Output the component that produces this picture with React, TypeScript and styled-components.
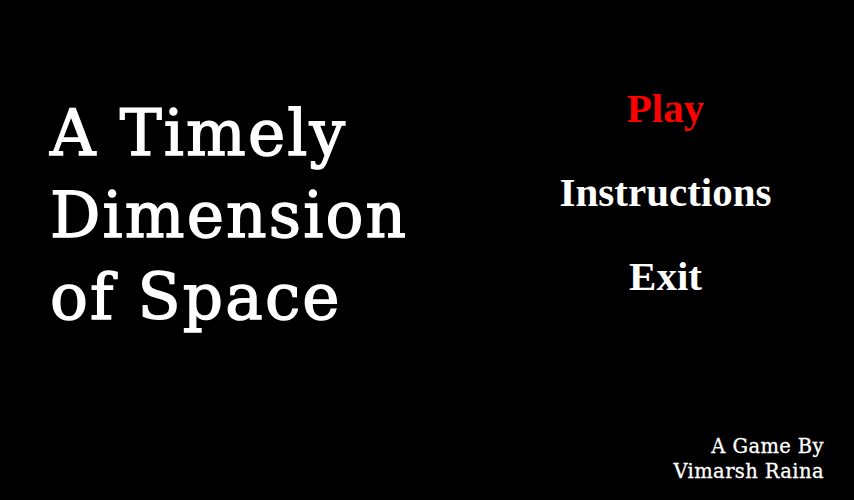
import React from "react";
import styled, { createGlobalStyle } from "styled-components";

const Global = createGlobalStyle`
  html, body { margin: 0; padding: 0; background: #000; }
  #root { width: 854px; height: 500px; }
`;

const Screen = styled.div`
  width: 854px;
  height: 500px;
  background: #000;
  display: grid;
  grid-template-columns: 1fr 1fr;
  grid-template-rows: 1fr auto;
  box-sizing: border-box;
  overflow: hidden;
`;

const Title = styled.h1`
  margin: 0;
  padding: 93px 0 0 50px;
  font-family: "DejaVu Serif", serif;
  font-weight: 400;
  font-size: 63px;
  line-height: 82px;
  letter-spacing: 2.1px;
  color: #fff;
  -webkit-text-stroke: 1.4px #fff;
  white-space: nowrap;
`;

const Menu = styled.nav`
  display: flex;
  flex-direction: column;
  align-items: center;
  padding: 84px 0 0 50px;
  gap: 36px;
`;

const MenuItem = styled.div<{ $active?: boolean }>`
  font-family: "Liberation Serif", "Times New Roman", serif;
  font-weight: 700;
  font-size: 41px;
  line-height: 48px;
  color: ${(p) => (p.$active ? "#ff0000" : "#fff")};
`;

const Credit = styled.div`
  grid-column: 2;
  justify-self: end;
  text-align: right;
  padding: 0 30px 16px 0;
  font-family: "DejaVu Serif", serif;
  font-size: 19.5px;
  line-height: 25px;
  letter-spacing: 0.4px;
  color: #fff;
  -webkit-text-stroke: 0.3px #fff;
`;

export default function App() {
  return (
    <>
      <Global />
      <Screen>
        <Title>
          A Timely
          <br />
          Dimension
          <br />
          of Space
        </Title>
        <Menu>
          <MenuItem $active>Play</MenuItem>
          <MenuItem>Instructions</MenuItem>
          <MenuItem>Exit</MenuItem>
        </Menu>
        <Credit>
          A Game By
          <br />
          Vimarsh Raina
        </Credit>
      </Screen>
    </>
  );
}
